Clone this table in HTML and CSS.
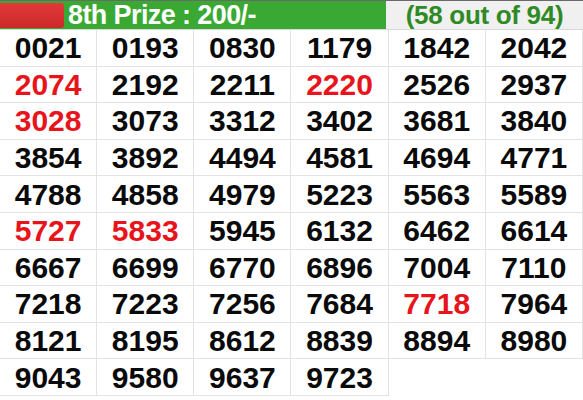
FILE: index.html
```html
<!DOCTYPE html>
<html>
<head>
<meta charset="utf-8">
<link rel="stylesheet" href="styles.css">
</head>
<body>
<div class="sheet">
  <div class="header">
    <div class="prize">
      <span class="redbox"></span>
      <span class="prize-title">8th Prize : 200/-</span>
    </div>
    <div class="count">(58 out of 94)</div>
  </div>
  <div class="grid">
    <div class="cell">0021</div><div class="cell">0193</div><div class="cell">0830</div><div class="cell">1179</div><div class="cell">1842</div><div class="cell">2042</div>
    <div class="cell red">2074</div><div class="cell">2192</div><div class="cell">2211</div><div class="cell red">2220</div><div class="cell">2526</div><div class="cell">2937</div>
    <div class="cell red">3028</div><div class="cell">3073</div><div class="cell">3312</div><div class="cell">3402</div><div class="cell">3681</div><div class="cell">3840</div>
    <div class="cell">3854</div><div class="cell">3892</div><div class="cell">4494</div><div class="cell">4581</div><div class="cell">4694</div><div class="cell">4771</div>
    <div class="cell">4788</div><div class="cell">4858</div><div class="cell">4979</div><div class="cell">5223</div><div class="cell">5563</div><div class="cell">5589</div>
    <div class="cell red">5727</div><div class="cell red">5833</div><div class="cell">5945</div><div class="cell">6132</div><div class="cell">6462</div><div class="cell">6614</div>
    <div class="cell">6667</div><div class="cell">6699</div><div class="cell">6770</div><div class="cell">6896</div><div class="cell">7004</div><div class="cell">7110</div>
    <div class="cell">7218</div><div class="cell">7223</div><div class="cell">7256</div><div class="cell">7684</div><div class="cell red">7718</div><div class="cell">7964</div>
    <div class="cell">8121</div><div class="cell">8195</div><div class="cell">8612</div><div class="cell">8839</div><div class="cell">8894</div><div class="cell">8980</div>
    <div class="cell">9043</div><div class="cell">9580</div><div class="cell">9637</div><div class="cell">9723</div>
  </div>
</div>
</body>
</html>
```

FILE: styles.css
```css
html, body {
  margin: 0;
  padding: 0;
  background: #ffffff;
}
.sheet {
  width: 583px;
  font-family: "Liberation Sans", Arial, sans-serif;
  font-weight: bold;
}
.header {
  display: flex;
  height: 30px;
  border-top: 1px solid #6a6a6a;
  box-sizing: border-box;
  border-bottom: 1px solid #d8d8d8;
}
.prize {
  width: 386px;
  background: #3aa933;
  display: flex;
  align-items: center;
  gap: 4px;
}
.redbox {
  width: 64px;
  height: 25px;
  margin-top: 1px;
  border-radius: 0 3px 3px 0;
  background: linear-gradient(#e23838, #cb2a2a);
}
.prize-title {
  color: #ffffff;
  font-size: 27px;
  letter-spacing: -0.6px;
  line-height: 28px;
}
.count {
  flex: 1;
  background: #f0f0f0;
  color: #2f8a25;
  font-size: 26px;
  letter-spacing: -0.3px;
  line-height: 28px;
  text-align: center;
}
.grid {
  display: grid;
  grid-template-columns: repeat(6, 1fr);
  grid-auto-rows: 36.6px;
}
.cell {
  border-right: 1px solid #e3e3e3;
  border-bottom: 1px solid #e3e3e3;
  color: #0a0a0a;
  font-size: 30px;
  display: flex;
  align-items: center;
  justify-content: center;
  padding-top: 1px;
}
.cell.red {
  color: #e8141c;
}
```
